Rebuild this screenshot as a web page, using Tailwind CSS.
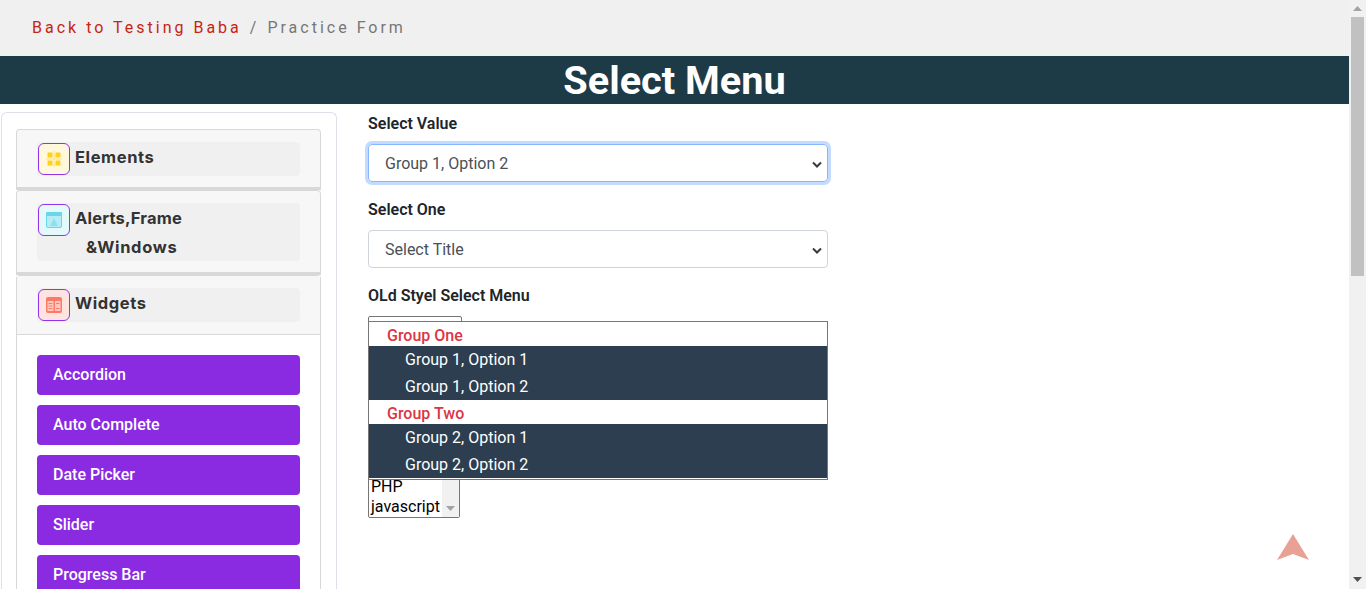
<!DOCTYPE html>
<html lang="en">
<head>
  <meta charset="UTF-8" />
  <meta name="viewport" content="width=device-width, initial-scale=1.0" />
  <title>Select Menu</title>
  <script src="https://cdn.jsdelivr.net/npm/@tailwindcss/browser@4"></script>
</head>
<body class="bg-white h-[589px] overflow-hidden font-['Roboto',sans-serif] text-[#212529] relative">
  <div class="w-[1349px]">
    <!-- breadcrumb -->
    <div class="h-14 bg-[#f0f0f0] flex items-center pl-8 pb-[1px] text-base tracking-[3px]">
      <a class="text-[#c8240f]">Back to Testing Baba</a>
      <span class="text-[#777] ml-2">/</span>
      <span class="text-[#777] ml-2">Practice Form</span>
    </div>
    <!-- title -->
    <h1 class="h-12 bg-[#1d3a47] text-white text-center text-[39.7px] leading-[50px] font-bold">Select Menu</h1>

    <div class="flex">
      <!-- sidebar -->
      <div class="w-[336px] h-[477px] ml-[1px] mt-2 border border-b-0 border-[#dfdfe8] rounded-t-md pt-4 pl-[14px] pr-[15px] overflow-hidden shrink-0 font-['Inter',sans-serif]">
        <div class="h-[61px] bg-[#f7f7f7] border border-[#d8d8d8] border-b-[3px] rounded-t-[4px] px-5 pt-3">
          <div class="h-[34px] bg-[#f0f0f0] rounded-[4px] flex pt-[1px] pl-[1px]">
            <div class="w-8 h-8 rounded-md border border-[#9333ea] bg-[#fff8dc] flex items-center justify-center">
              <svg width="16" height="16" viewBox="0 0 16 16"><path d="M0 8h16M8 0v16" stroke="#ffe27a"/><rect x="1.500" y="1.500" width="5" height="5" rx="0.500" fill="#ffd11a"/><rect x="9.500" y="1.500" width="5" height="5" rx="0.500" fill="#ffd11a"/><rect x="1.500" y="9.500" width="5" height="5" rx="0.500" fill="#ffd11a"/><rect x="9.500" y="9.500" width="5" height="5" rx="0.500" fill="#ffd11a"/></svg>
            </div>
            <span class="ml-[5px] text-[16.5px] leading-[28px] font-bold text-[#333] tracking-[0.6px]">Elements</span>
          </div>
        </div>
        <div class="h-[85px] bg-[#f7f7f7] border border-[#d8d8d8] border-b-[3px] rounded-t-[4px] px-5 pt-3">
          <div class="h-[58px] bg-[#f0f0f0] rounded-[4px] pt-[1px] pl-[1px] relative">
            <div class="flex">
              <div class="w-8 h-8 rounded-md border border-[#9333ea] bg-[#e3f9fc] flex items-center justify-center">
                <svg width="16" height="16" viewBox="0 0 16 16"><rect x="0.500" y="0.500" width="15" height="15" rx="1.500" fill="#b5ecf5" stroke="#6bd6ea"/><rect x="0" y="0" width="16" height="4" rx="1" fill="#6bd6ea"/><path d="M8 6l4 8H4z" fill="#8fe0ee"/></svg>
              </div>
              <span class="ml-[5px] text-[16.5px] leading-[28px] font-bold text-[#333] tracking-[0.2px]">Alerts,Frame</span>
            </div>
            <div class="ml-[48px] -mt-[3px] text-[16.5px] leading-[28px] font-bold text-[#333] tracking-[0.7px]">&amp;Windows</div>
          </div>
        </div>
        <div class="bg-white border border-b-0 border-[#d8d8d8] rounded-t-[4px] h-[400px]">
          <div class="h-[59px] bg-[#f7f7f7] border-b border-[#d8d8d8] px-5 pt-3">
            <div class="h-[34px] bg-[#f0f0f0] rounded-[4px] flex pt-[1px] pl-[1px]">
              <div class="w-8 h-8 rounded-md border border-[#9333ea] bg-[#ffe3e0] flex items-center justify-center">
                <svg width="16" height="16" viewBox="0 0 16 16"><rect width="16" height="16" rx="2" fill="#ff7a66"/><rect x="1.500" y="4" width="6" height="10" fill="#ffc9c0"/><rect x="9" y="4" width="5.500" height="10" fill="#ffc9c0"/><path d="M2.500 6.500h4M2.500 9h4M2.500 11.500h4M10 6.500h3.500M10 11.500h3.500" stroke="#ff7a66"/></svg>
              </div>
              <span class="ml-[5px] text-[16.5px] leading-[28px] font-bold text-[#333] tracking-[0.6px]">Widgets</span>
            </div>
          </div>
          <div class="pt-5 px-5 flex flex-col gap-[10px] font-['Roboto',sans-serif] font-medium text-white text-base">
            <div class="h-10 bg-[#8a2be2] rounded-[4px] pl-4 flex items-center">Accordion</div>
            <div class="h-10 bg-[#8a2be2] rounded-[4px] pl-4 flex items-center">Auto Complete</div>
            <div class="h-10 bg-[#8a2be2] rounded-[4px] pl-4 flex items-center">Date Picker</div>
            <div class="h-10 bg-[#8a2be2] rounded-[4px] pl-4 flex items-center">Slider</div>
            <div class="h-10 bg-[#8a2be2] rounded-[4px] pl-4 flex items-center">Progress Bar</div>
          </div>
        </div>
      </div>

      <!-- form -->
      <div class="ml-[31px] w-[460px] pt-2">
        <label class="block font-semibold leading-6">Select Value</label>
        <div class="mt-2 h-[38px] rounded-[4px] border border-[#86b7fe] ring-[3px] ring-[#0d6efd]/25 pl-4 pr-[2px] pt-[2px] flex items-center justify-between text-[#495057]">
          <span>Group 1, Option 2</span>
          <svg class="-mt-[1px]" width="16" height="16" viewBox="0 0 16 16" fill="none"><path d="M4 6.500l4 4 4-4" stroke="#343a40" stroke-width="2"/></svg>
        </div>
        <label class="block font-semibold leading-6 mt-4">Select One</label>
        <div class="mt-2 h-[38px] rounded-[4px] border border-[#ced4da] pl-4 pr-[2px] pt-[2px] flex items-center justify-between text-[#495057]">
          <span>Select Title</span>
          <svg class="-mt-[1px]" width="16" height="16" viewBox="0 0 16 16" fill="none"><path d="M4 6.500l4 4 4-4" stroke="#343a40" stroke-width="2"/></svg>
        </div>
        <label class="block font-semibold leading-6 mt-4">OLd Styel Select Menu</label>
        <div class="relative mt-2 h-[202px]">
          <!-- boxes behind the open list -->
          <div class="absolute left-0 top-0 w-[94px] h-8 border border-[#767676] rounded-t-[2px]"></div>
          <div class="absolute left-0 bottom-0 w-[92px] h-[60px] border border-[#767676] rounded-b-[2px] flex text-black">
            <div class="w-[73px] flex flex-col justify-end pl-[2px] leading-5">
              <span>PHP</span>
              <span>javascript</span>
            </div>
            <div class="flex-1 bg-[#f1f1f1] flex items-end justify-center pb-[6px]">
              <svg width="9" height="5" viewBox="0 0 9 5"><path d="M0 0h9L4.500 5z" fill="#a3a3a3"/></svg>
            </div>
          </div>
          <!-- open list -->
          <div class="absolute left-0 top-[5px] w-[460px] h-[159px] border border-[#767676] bg-white">
            <div class="h-6 pl-[18px] leading-[28px] font-medium text-[#dc3545]">Group One</div>
            <div class="h-[54px] bg-[#2c3e50] text-white pl-9 leading-[27px]">
              <div>Group 1, Option 1</div>
              <div>Group 1, Option 2</div>
            </div>
            <div class="h-6 pl-[18px] leading-[28px] font-medium text-[#dc3545]">Group Two</div>
            <div class="h-[54px] bg-[#2c3e50] text-white pl-9 leading-[27px]">
              <div>Group 2, Option 1</div>
              <div>Group 2, Option 2</div>
            </div>
          </div>
        </div>
      </div>
    </div>
  </div>

  <!-- back to top -->
  <svg class="absolute left-[1277px] top-[534px]" width="32" height="26" viewBox="0 0 32 26"><path d="M16 0l16 26-16-6-16 6z" fill="#e9a195"/></svg>

  <!-- page scrollbar -->
  <div class="absolute right-0 top-0 w-[17px] h-[589px] bg-[#f1f1f1]">
    <svg class="absolute left-[4px] top-[6px]" width="9" height="5" viewBox="0 0 9 5"><path d="M4.500 0L9 5H0z" fill="#a3a3a3"/></svg>
    <div class="absolute left-[2px] top-[17px] w-[13px] h-[259px] bg-[#c1c1c1]"></div>
    <svg class="absolute left-[4px] top-[577px]" width="9" height="5" viewBox="0 0 9 5"><path d="M0 0h9L4.500 5z" fill="#505050"/></svg>
  </div>
</body>
</html>
